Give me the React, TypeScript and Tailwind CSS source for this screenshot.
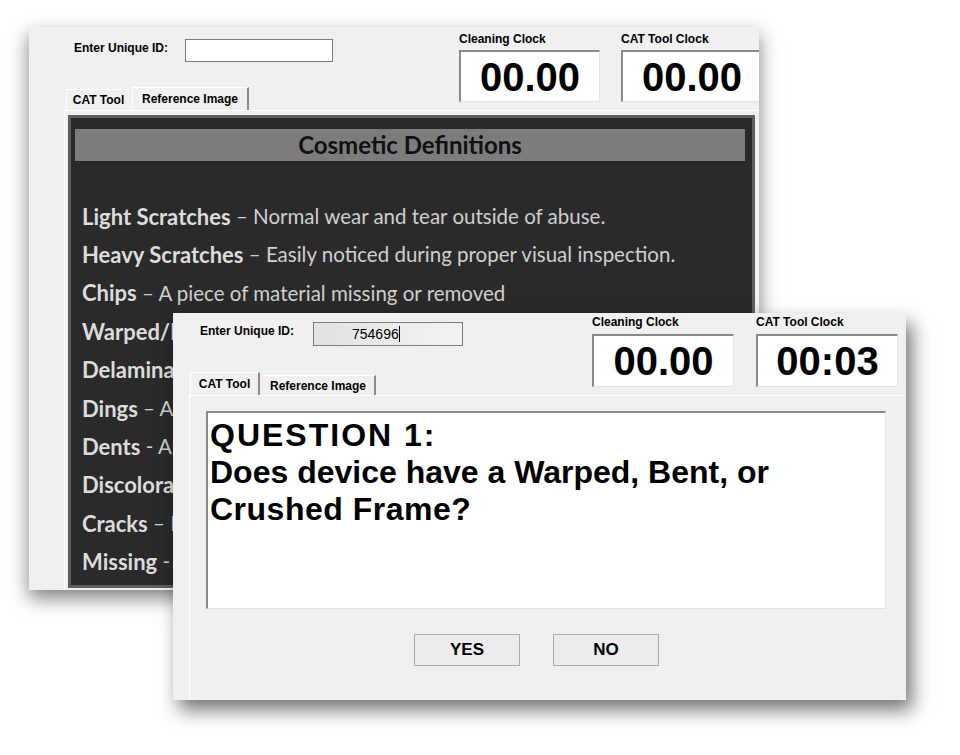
import React from 'react';

const UI = "font-['Liberation_Sans',Arial,sans-serif]";

const DEFINITIONS = [
  { term: 'Light Scratches', dash: '–', text: 'Normal wear and tear outside of abuse.' },
  { term: 'Heavy Scratches', dash: '–', text: 'Easily noticed during proper visual inspection.' },
  { term: 'Chips', dash: '–', text: 'A piece of material missing or removed' },
  { term: 'Warped/Bent', dash: '–', text: 'Frame is no longer flat or straight' },
  { term: 'Delamination', dash: '–', text: 'Layers of the display separating' },
  { term: 'Dings', dash: '–', text: 'A small mark on an edge or corner' },
  { term: 'Dents', dash: '-', text: 'A recessed area in the housing' },
  { term: 'Discoloration', dash: '–', text: 'Fading or change of original color' },
  { term: 'Cracks', dash: '–', text: 'Broken glass or housing' },
  { term: 'Missing', dash: '-', text: 'Parts or buttons not present' },
];

function Clock({ label, value, w, h, gap }: { label: string; value: string; w: string; h: string; gap: string }) {
  return (
    <div className="flex flex-col shrink-0">
      <span className={`text-[12px] leading-[14px] font-bold text-black ${gap}`}>{label}</span>
      <div
        className={`${w} ${h} flex items-center justify-center bg-white border-t-2 border-l-2 border-r border-b border-t-[#8a8a8a] border-l-[#8a8a8a] border-r-[#e2e2e2] border-b-[#e2e2e2]`}
      >
        <span className="text-[40px] font-bold text-black leading-none">{value}</span>
      </div>
    </div>
  );
}

function BackWindow() {
  return (
    <div className={`absolute left-[29px] top-[27px] w-[730px] h-[563px] overflow-hidden bg-[#f0f0f0] shadow-[0px_8px_18px_rgba(0,0,0,0.5)] ${UI}`}>
      <div className="flex h-[83px]">
        <div className="w-[430px] shrink-0 pl-[35px] flex flex-col justify-between">
          <div className="flex items-start pt-[12px] pl-[10px]">
            <span className="w-[111px] mt-[2px] text-[12px] leading-[14px] font-bold">Enter Unique ID:</span>
            <div className="w-[148px] h-[23px] bg-white border border-[#7d7d7d]" />
          </div>
          <div className="flex items-end pl-[2px]">
            <div className="w-[64px] h-[21px] flex items-center justify-center border-l border-t border-white text-[12px] font-bold">
              CAT Tool
            </div>
            <div className="w-[117px] h-[23px] ml-[2px] flex items-center justify-center border-l border-t border-white border-r-2 border-r-[#8c8c8c] text-[12px] font-bold">
              Reference Image
            </div>
          </div>
        </div>
        <div className="flex gap-[21px] pt-[5px] shrink-0">
          <Clock label="Cleaning Clock" value="00.00" w="w-[141px]" h="h-[52px]" gap="mb-[4px]" />
          <Clock label="CAT Tool Clock" value="00.00" w="w-[141px]" h="h-[52px]" gap="mb-[4px]" />
        </div>
      </div>

      {/* reference image tab */}
      <div className="ml-[35px] h-[480px] border-t border-l border-white pt-[4px] pl-[3px]">
        <div className="w-[687px] h-[473px] bg-[#2a2a2a] border-[3px] border-[#5e5e5e] pt-[11px] pl-[4px] pr-[7px] font-['Lato','Open_Sans',sans-serif]">
          <div className="h-[32px] bg-[#7c7c7c] flex items-center justify-center">
            <span className="text-[24px] font-bold text-[#111]">Cosmetic Definitions</span>
          </div>
          <div className="pt-[36px] pl-[7px] flex flex-col">
            {DEFINITIONS.map((d) => (
              <div key={d.term} className="h-[38.4px] flex items-center whitespace-nowrap">
                <span className="text-[22px] font-bold text-[#dcdcdc]">{d.term}</span>
                <span className="text-[20.5px] text-[#cfcfcf]">&nbsp;{d.dash} {d.text}</span>
              </div>
            ))}
          </div>
        </div>
      </div>
    </div>
  );
}

function FrontWindow() {
  return (
    <div className={`absolute left-[173px] top-[313px] w-[733px] h-[387px] overflow-hidden bg-[#f0f0f0] shadow-[6px_10px_18px_rgba(0,0,0,0.55)] ${UI}`}>
      <div className="flex h-[82px]">
        <div className="w-[419px] shrink-0 pl-[16px] flex flex-col justify-between">
          <div className="flex items-start pt-[9px] pl-[11px]">
            <span className="w-[113px] mt-[2px] text-[12px] leading-[14px] font-bold">Enter Unique ID:</span>
            <div className="w-[150px] h-[24px] flex items-center pl-[38px] bg-gradient-to-r from-[#e2e2e2] to-[#f3f3f3] border border-[#7d7d7d]">
              <span className="text-[14px] text-black">754696</span>
              <span className="w-[1px] h-[16px] bg-black" />
            </div>
          </div>
          <div className="flex items-end pl-[1px]">
            <div className="w-[70px] h-[23px] flex items-center justify-center border-l border-t border-white border-r-2 border-r-[#8c8c8c] text-[12px] font-bold">
              CAT Tool
            </div>
            <div className="w-[114px] h-[20px] ml-[2px] flex items-center justify-center border-t border-white border-r-2 border-r-[#8c8c8c] text-[12px] font-bold">
              Reference Image
            </div>
          </div>
        </div>
        <div className="flex gap-[22px] pt-[2px] shrink-0">
          <Clock label="Cleaning Clock" value="00.00" w="w-[142px]" h="h-[53px]" gap="mb-[5px]" />
          <Clock label="CAT Tool Clock" value="00:03" w="w-[142px]" h="h-[53px]" gap="mb-[5px]" />
        </div>
      </div>

      {/* CAT tool tab */}
      <div className="ml-[16px] h-[305px] border-t border-l border-white pt-[15px] pl-[16px]">
        <div className="w-[680px] h-[198px] bg-white border-t-2 border-l-2 border-r border-b border-t-[#8a8a8a] border-l-[#8a8a8a] border-r-[#e2e2e2] border-b-[#e2e2e2] pl-[2px] pt-[4px]">
          <p className="text-[32px] leading-[37px] font-bold text-black">
            <span className="tracking-[2px]">QUESTION 1:</span>
            <br />
            Does device have a Warped, Bent, or
            <br />
            <span className="tracking-[0.5px]">Crushed Frame?</span>
          </p>
        </div>
        <div className="flex gap-[33px] pl-[208px] mt-[25px]">
          <button className="w-[106px] h-[32px] bg-[#ececec] border border-[#acacac] text-[17px] font-bold text-black">YES</button>
          <button className="w-[106px] h-[32px] bg-[#ececec] border border-[#acacac] text-[17px] font-bold text-black">NO</button>
        </div>
      </div>
    </div>
  );
}

export default function App() {
  return (
    <div className="relative w-[960px] h-[755px] bg-white overflow-hidden">
      <BackWindow />
      <FrontWindow />
    </div>
  );
}
